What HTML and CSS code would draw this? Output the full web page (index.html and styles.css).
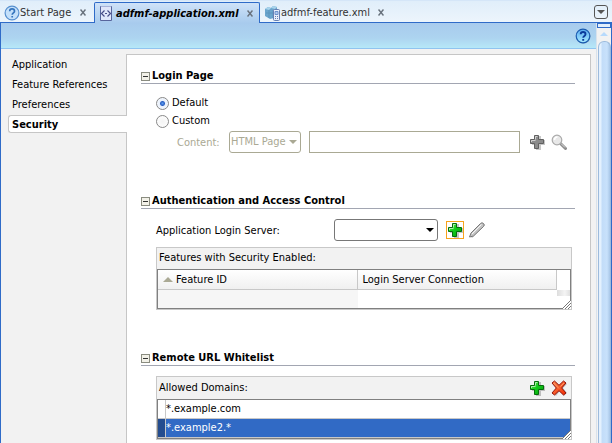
FILE: index.html
```html
<!DOCTYPE html>
<html lang="en">
<head>
<meta charset="utf-8">
<title>adfmf-application.xml</title>
<link rel="stylesheet" href="styles.css">
</head>
<body>
<svg class="defs" aria-hidden="true">
  <defs>
    <linearGradient id="green" x1="0" y1="0" x2="1" y2="1"><stop offset="0" stop-color="#5cf04c"/><stop offset=".5" stop-color="#10c818"/><stop offset="1" stop-color="#089c10"/></linearGradient>
    <linearGradient id="red" x1="0" y1="0" x2="1" y2="1"><stop offset="0" stop-color="#ff8a50"/><stop offset="1" stop-color="#f02800"/></linearGradient>
    <linearGradient id="help" x1="0" y1="0" x2="0" y2="1"><stop offset="0" stop-color="#5aaaf0"/><stop offset="1" stop-color="#a8ecff"/></linearGradient>
    <symbol id="plus" viewBox="0 0 16 16"><path d="M7 2h5v4h4v5h-4v5H7v-5H3V6h4z" fill="#000" opacity=".22"/><path d="M5.500 1.500h4v4h5v4h-5v5h-4v-5h-4v-4h4z" stroke-linejoin="round" stroke="currentColor"/><path d="M6.500 5.500v-3h2M2.500 8v-1.500h4" fill="none" stroke="#fff" opacity=".6"/></symbol>
  </defs>
</svg>
<nav class="tabs" aria-label="Documents">
  <div class="tab first"><svg class="i16" viewBox="0 0 16 16"><circle cx="8" cy="8" r="6.900" fill="#c4e0fa" stroke="#5790cf" stroke-width="1.200"/><path d="M5.700 6.200c0-3 4.800-3 4.800 0 0 1.700-2.300 1.700-2.300 3.600M8.200 11v1.600" fill="none" stroke="#3474bd" stroke-width="1.700"/></svg><a href="#start">Start Page</a><button class="close" aria-label="Close Start Page"><svg viewBox="0 0 6 7"><path d="M.5.500l5 6M5.500.500l-5 6"/></svg></button></div>
  <div class="tab active"><svg class="i16" viewBox="0 0 16 16"><path d="M2.500 1.500h11v14h-11z" fill="#dfe6fa" stroke="#57659c"/><path d="M3 1.500h10" stroke="#a7b2d8"/><path d="M6.500 5.500l-3 3 3 3M9.500 5.500l3 3-3 3" fill="none" stroke="#474c88" stroke-width="1.200"/><path d="M7 8h2v1H7z" fill="#474c88"/></svg><a href="#app" aria-current="page">adfmf-application.xml</a><button class="close" aria-label="Close adfmf-application.xml"><svg viewBox="0 0 6 7"><path d="M.5.500l5 6M5.500.500l-5 6"/></svg></button></div>
  <div class="tab third"><svg class="i16" viewBox="0 0 16 16"><path d="M0 4l3-2 3 1 2-2 4 1v5l-3 6-4 1-5-3z" fill="#6aa5cd"/><path d="M0 4l3-2 3 1-2 2zM6 3l2-2 4 1-2 2z" fill="#a9d4ec"/><path d="M4 5v8M8 5v8M1 8h8" stroke="#4d87b0" opacity=".5"/><rect x="8.500" y="4.500" width="6" height="11" rx="1" fill="#e9effb" stroke="#6680b3"/><path d="M10 6.500h3v3h-3z" fill="#afcaf2" stroke="#6c91ca"/><path d="M10 11.500h1M12 11.500h1M10 13.500h1M12 13.500h1" stroke="#6680b3"/></svg><a href="#feature">adfmf-feature.xml</a><button class="close" aria-label="Close adfmf-feature.xml"><svg viewBox="0 0 6 7"><path d="M.5.500l5 6M5.500.500l-5 6"/></svg></button></div>
  <button class="tab-list" aria-label="Open documents"><svg viewBox="0 0 8 4"><path d="M0 0h8L4 4z"/></svg></button>
</nav>
<div class="editor">
  <div class="page">
    <header class="band"><button class="icon" aria-label="Help"><svg class="i16" viewBox="0 0 16 16"><circle cx="8.500" cy="8.500" r="7" fill="#47637c" opacity=".5"/><circle cx="8" cy="8" r="6.800" fill="url(#help)" stroke="#1a5bb0" stroke-width="1.200"/><path d="M5.700 6.200c0-3 4.800-3 4.800 0 0 1.700-2.300 1.700-2.300 3.600M8.200 11v1.800" fill="none" stroke="#0b3b9c" stroke-width="1.900"/></svg></button></header>
    <div class="body">
      <nav class="side" aria-label="Sections">
        <a href="#application">Application</a>
        <a href="#references">Feature References</a>
        <a href="#preferences">Preferences</a>
        <a class="current" href="#security">Security</a>
      </nav>
      <main class="content">
        <section>
          <h2><button class="fold" aria-label="Collapse Login Page"></button>Login Page</h2>
          <div class="fields">
            <label class="radio"><input type="radio" name="login" checked>Default</label>
            <label class="radio"><input type="radio" name="login">Custom</label>
            <div class="row custom">
              <label for="kind">Content:</label>
              <span class="drop kind"><select id="kind" disabled><option>HTML Page</option></select><svg viewBox="0 0 8 4"><path d="M0 0h8L4 4z"/></svg></span>
              <input class="path" type="text" aria-label="Content path" disabled>
              <button class="icon gray" aria-label="Add content" disabled><svg class="i16" fill="#8b8b8b"><use href="#plus"/></svg></button>
              <button class="icon" aria-label="Find content" disabled><svg class="i16" viewBox="0 0 16 16"><path d="M9.500 9.500l5 5" stroke="#8e8e8e" stroke-width="3" stroke-linecap="round"/><path d="M10 9.500l4 4" stroke="#ddd"/><circle cx="6" cy="6" r="4.800" fill="#e8e8e8" stroke="#aaa" stroke-width="1.200"/><path d="M3.500 6c0-2 1-3 3-3" fill="none" stroke="#fff" stroke-width="1.500"/></svg></button>
            </div>
          </div>
        </section>
        <section>
          <h2><button class="fold" aria-label="Collapse Authentication and Access Control"></button>Authentication and Access Control</h2>
          <div class="fields auth">
            <div class="row server">
              <label for="server">Application Login Server:</label>
              <span class="drop"><select id="server"><option></option></select><svg viewBox="0 0 8 4"><path d="M0 0h8L4 4z"/></svg></span>
              <button class="icon green framed" aria-label="Add server"><svg class="i16" fill="url(#green)"><use href="#plus"/></svg></button>
              <button class="icon" aria-label="Edit server"><svg class="i16" viewBox="0 0 16 16"><path d="M2 15L15 2" stroke="#ccc" stroke-width="3"/><path d="M.5 15l1.500-4L11.500 1.500q1.500-1.500 3 0t0 3L4.500 14z" fill="#c4c4c4" stroke="#777"/><path d="M3 12L12.500 2.500" stroke="#f5f5f5"/></svg></button>
            </div>
            <div class="panel">
              <div class="title">Features with Security Enabled:</div>
              <div class="well">
                <table>
                  <thead><tr><th><svg class="sort" viewBox="0 0 10 5"><path d="M0 5h10L5 0z"/></svg>Feature ID</th><th>Login Server Connection</th><td class="gap"></td></tr></thead>
                  <tbody><tr><td class="shade"></td><td></td><td class="gap"><i class="nub"></i></td></tr></tbody>
                </table>
                <svg class="grip" viewBox="0 0 9 9"><path d="M9 0v9H0z" fill="#fff"/><path d="M0 9L9 0M3 9l6-6M6 9l3-3" stroke="#777"/></svg>
              </div>
            </div>
          </div>
        </section>
        <section>
          <h2><button class="fold" aria-label="Collapse Remote URL Whitelist"></button>Remote URL Whitelist</h2>
          <div class="fields">
            <div class="panel">
              <div class="title tools"><span>Allowed Domains:</span>
                <button class="icon green" aria-label="Add domain"><svg class="i16" fill="url(#green)"><use href="#plus"/></svg></button>
                <button class="icon" aria-label="Delete domain"><svg class="i16" viewBox="0 0 16 16"><path d="M2 4l3-2 4 4 4-4 3 2-4 4 4 5-3 3-4-5-4 5-3-3 4-5z" fill="#000" opacity=".2"/><path d="M1 3l2.500-2L8 5.300 12.500 1 15 3l-4.300 5 4.300 5-2.500 2L8 10.700 3.500 15 1 13l4.300-5z" fill="url(#red)" stroke="#8f1208" stroke-linejoin="round"/><path d="M2.500 3L8 8.500M13 3L9.500 6.500" stroke="#ffb080" opacity=".7"/></svg></button>
              </div>
              <div class="well">
                <ul class="domains"><li>*.example.com</li><li class="selected">*.example2.*</li></ul>
                <svg class="grip" viewBox="0 0 9 9"><path d="M9 0v9H0z" fill="#fff"/><path d="M0 9L9 0M3 9l6-6M6 9l3-3" stroke="#777"/></svg>
              </div>
            </div>
          </div>
        </section>
      </main>
    </div>
  </div>
  <div class="scroll" aria-hidden="true"><div class="split"></div><svg viewBox="0 0 8 4"><path d="M0 4h8L4 0z"/></svg><div class="thumb"></div></div>
</div>
</body>
</html>
```
FILE: styles.css
```css
* { box-sizing: border-box; }
body {
  margin: 0;
  min-height: 100vh;
  display: flex;
  flex-direction: column;
  font: 11px/14px "DejaVu Sans Condensed", "DejaVu Sans", sans-serif;
  color: #000;
  background: #f2f2f2;
}
button, input, select { font: inherit; color: inherit; margin: 0; padding: 0; }
button { border: 0; background: none; }
a { color: inherit; text-decoration: none; }
svg { display: block; flex: none; }
.defs { position: absolute; width: 0; height: 0; }
.i16 { width: 16px; height: 16px; }

.tabs {
  display: flex;
  height: 23px;
  align-items: flex-end;
  border-top: 1px solid #d5e6f8;
  background: linear-gradient(#e0eefa, #edf5fc);
  box-shadow: inset 0 -1px #2f6bc8;
}
.tab { display: flex; align-items: center; height: 21px; color: #333; white-space: nowrap; }
.tab a { flex: 1; padding-top: 1px; }
.first { width: 94px; padding: 0 8px 0 4px; }
.active {
  width: 166px;
  padding: 0 6px 0 3px;
  border: 1px solid #2f6bc8;
  border-bottom: 0;
  border-radius: 2px 2px 0 0;
  background: linear-gradient(#cfe2f8, #a8cbed);
  color: #000;
  font-weight: bold;
  font-style: italic;
}
.active a { padding-left: 2px; }
.third { width: 128px; padding: 0 4px 0 5px; }
.close { width: 6px; height: 9px; }
.close svg { width: 6px; height: 7px; fill: none; stroke: #68717c; stroke-width: 1.500; }
.tab-list {
  display: grid;
  place-items: center;
  width: 14px;
  height: 14px;
  margin: 0 4px 4px auto;
  border: 1px solid #555;
  border-radius: 3px;
}
.tab-list svg { width: 8px; height: 4px; fill: #555; }

.editor { flex: 1; display: flex; border: solid #2f6bc8; border-width: 0 1px; }
.page { flex: 1; min-width: 0; display: flex; flex-direction: column; }
.band {
  display: flex;
  justify-content: flex-end;
  align-items: center;
  height: 26px;
  padding-right: 5px;
  border-bottom: 1px solid #90c4f0;
  background: linear-gradient(#a8cbed, #add4f0 60%, #b6e8f8);
}
.icon { width: 16px; height: 16px; flex: none; }
.body { flex: 1; display: flex; padding: 5px 5px 0 7px; }
.side { width: 119px; flex: none; margin-right: -1px; z-index: 1; }
.side a { display: block; padding: 4px 4px 2px; line-height: 14px; }
.side .current {
  height: 18px;
  margin: 1px 0;
  padding: 2px 3px 0;
  border: 1px solid #c6c6c6;
  border-right: 0;
  border-radius: 3px 0 0 3px;
  background: #fff;
  font-weight: bold;
}
.content {
  flex: 1;
  min-width: 0;
  padding: 14px 15px 2px 14px;
  border: solid #c6c6c6;
  border-width: 1px 1px 0;
  background: #fff;
}
section + section { margin-top: 41px; }
h2 {
  display: flex;
  align-items: center;
  gap: 2px;
  margin: 0;
  height: 15px;
  border-bottom: 1px solid #a2a6b2;
  font-size: 11px;
}
.fold {
  width: 9px;
  height: 9px;
  border: 1px solid #8a8c80;
  background: linear-gradient(#333, #333) center / 5px 1px no-repeat #f2f1e8;
}
.fields { padding: 10px 3px 0 15px; }
.radio { display: flex; align-items: center; gap: 3px; height: 18px; }
.radio input {
  appearance: none;
  width: 13px;
  height: 13px;
  border: 1px solid #888;
  border-radius: 50%;
  background: radial-gradient(#f4f4f4, #fff);
}
.radio input:checked { background: radial-gradient(circle, #5c9cf0, #2c62c4 2px, #e8f0fc 3px, #fff); }
.row { display: flex; align-items: center; height: 22px; }
.row label { padding-top: 1px; }
.custom { margin-top: 1px; padding-left: 21px; color: #aaa994; }
.custom label { width: 52px; flex: none; }
.drop { position: relative; width: 104px; height: 22px; flex: none; color: #000; }
.drop select {
  appearance: none;
  width: 100%;
  height: 100%;
  padding-left: 1px;
  border: 1px solid #777;
  border-radius: 3px;
  background: #fff;
  opacity: 1;
}
.drop svg { position: absolute; right: 4px; top: 9px; width: 8px; height: 4px; fill: currentColor; pointer-events: none; }
.drop.kind { width: 72px; color: #aaa994; }
.kind select { border-color: #aaa994; }
.path { flex: 1; min-width: 0; height: 22px; margin: 0 9px 0 8px; border: 1px solid #aaa994; background: #fff; }
.custom .icon + .icon { margin-left: 6px; }
.custom .icon:last-child { margin-right: 5px; }
.gray { color: #606060; }
.green { color: #066c0c; }
.server label { width: 178px; }
.framed { display: grid; place-items: center; width: 18px; height: 18px; margin: 0 5px 0 8px; border: 1px solid #f7a31c; }
.panel { border: 1px solid #c8c8c8; background: #f2f2f2; }
.auth .panel { margin-top: 6px; }
.title { height: 21px; padding: 3px 2px; }
.tools { display: flex; align-items: center; height: 22px; padding-right: 4px; }
.tools span { flex: 1; }
.tools .icon + .icon { margin-left: 6px; }
.well { position: relative; border: 1px solid #808080; background: #fff; }
table { width: 100%; border-collapse: separate; border-spacing: 0; table-layout: fixed; }
th, td { height: 20px; padding: 0; }
th {
  width: 50%;
  padding: 0 5px;
  border: solid #c8c8c8;
  border-width: 0 1px 1px 0;
  background: linear-gradient(#fff, #f0f0f0);
  font-weight: normal;
  text-align: left;
}
.sort { display: inline-block; width: 10px; height: 5px; margin-right: 3px; fill: #aaa994; vertical-align: 1px; }
.gap { width: 13px; vertical-align: top; }
tbody td { height: 18px; }
.shade { background: #f6f6f6; }
.nub { display: block; height: 6px; background: linear-gradient(90deg, #ddd, #f4f4f4 60%, #e0e0e0); }
.grip { position: absolute; right: -1px; bottom: -1px; width: 9px; height: 9px; }
.domains { margin: 0; padding: 0; list-style: none; }
.domains li { height: 18px; padding: 2px 0 2px 8px; background: linear-gradient(#c8c8c8, #c8c8c8) 7px 0 / 1px 100% no-repeat; }
.domains .selected {
  height: 20px;
  color: #fff;
  border: solid #c8c8c8;
  border-width: 1px 0;
  background: linear-gradient(90deg, #244d8f 7px, #c8c8c8 7px, #c8c8c8 8px, #316ac5 8px);
}

.scroll { width: 15px; flex: none; display: flex; flex-direction: column; background: #f2f2f2; border-left: 1px solid #d8e2ec; }
.split { height: 5px; border: 1px solid #2f6bc8; background: #e2effc; }
.scroll svg { width: 8px; height: 4px; margin: 4px auto 5px; fill: #b7dafc; }
.thumb {
  flex: 1;
  margin-left: 1px;
  border: 1px solid #9dbbdc;
  border-bottom: 0;
  border-radius: 6px 6px 0 0;
  background: linear-gradient(90deg, #e4f1fe 2px, #c2dcf8 3px, #c8e1fb 8px, #a9c7e8);
}
```
